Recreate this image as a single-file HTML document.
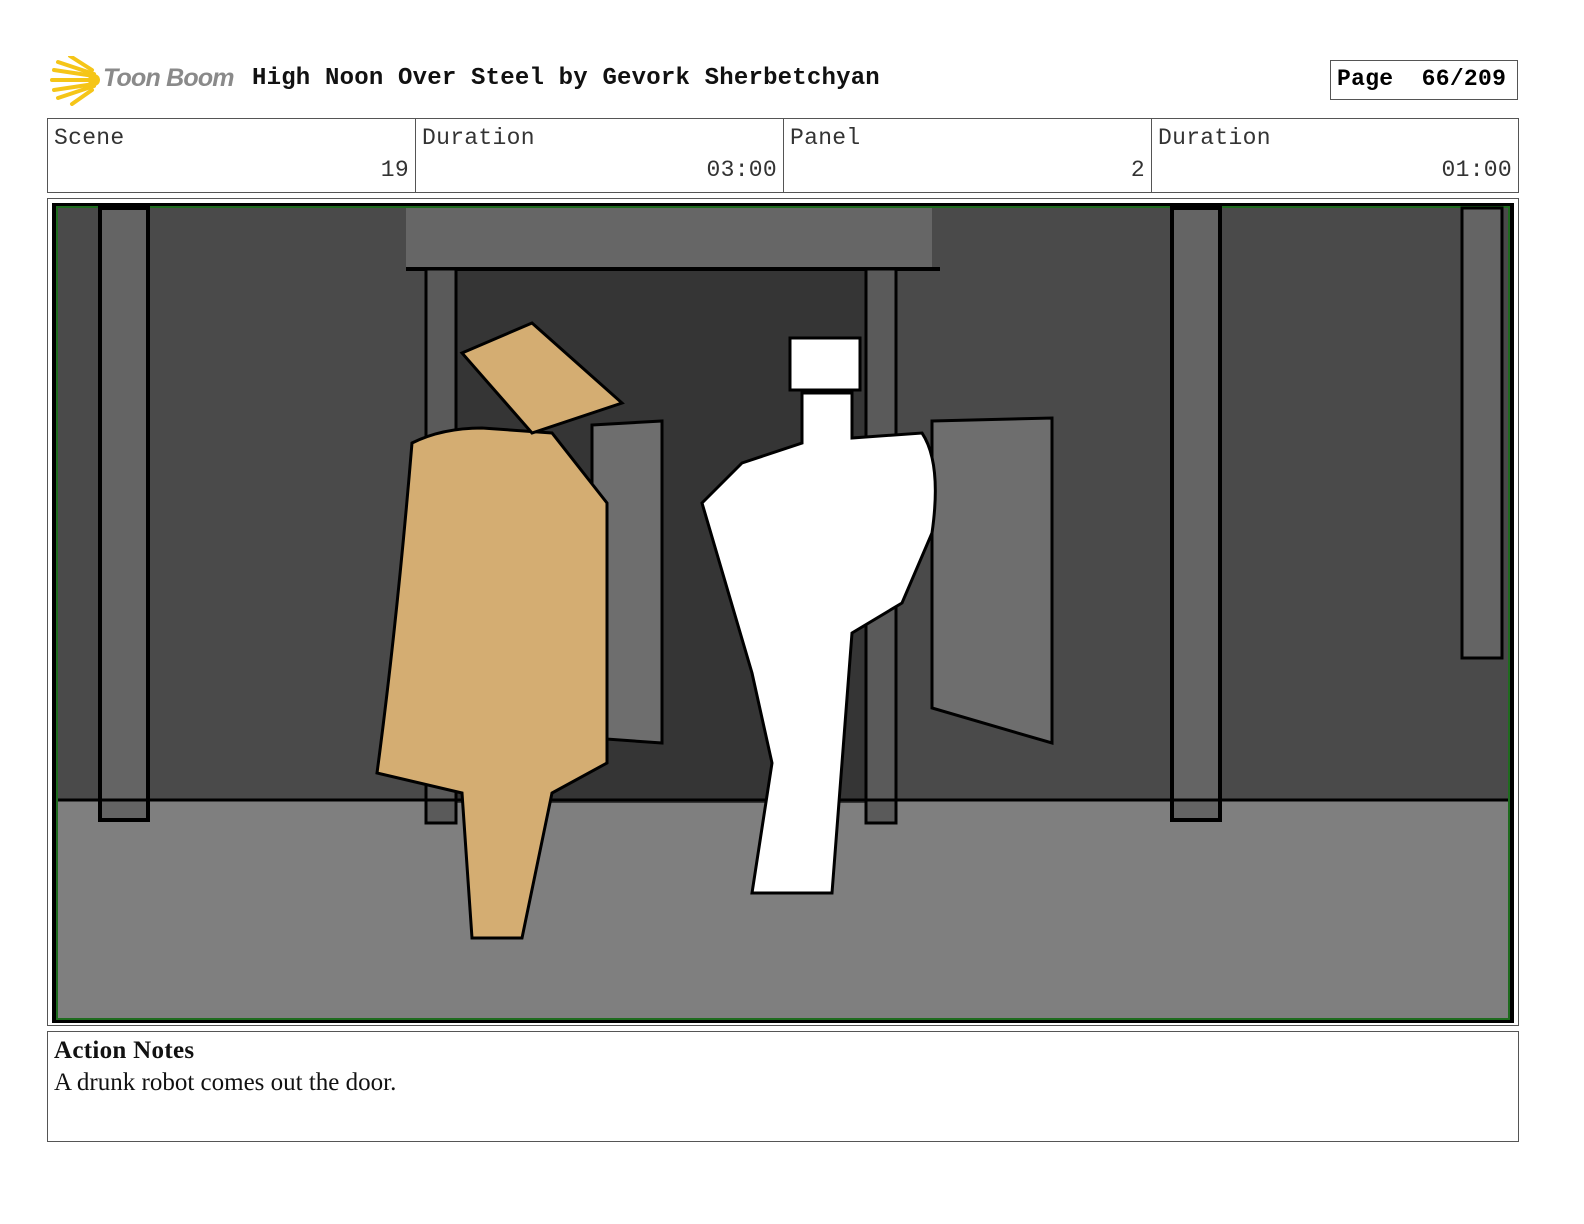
<!DOCTYPE html>
<html><head><meta charset="utf-8"><style>
body{margin:0;background:#fff;width:1584px;height:1224px;position:relative;overflow:hidden;font-family:"Liberation Mono",monospace}
.a{position:absolute}
.cell{position:absolute;top:118px;height:75px;border:1px solid #555;box-sizing:border-box;font-size:23px;color:#333;letter-spacing:0.3px}
.cell .l{position:absolute;left:6px;top:6px}
.cell .v{position:absolute;right:6px;top:38px}
</style></head><body>
<svg class="a" style="left:50px;top:56px" width="52" height="50" viewBox="0 0 52 50">
<g stroke="#f5c518" stroke-width="4" stroke-linecap="round">
<line x1="46" y1="24" x2="2" y2="24"/><line x1="44" y1="18" x2="8" y2="6"/><line x1="44" y1="30" x2="8" y2="42"/>
<line x1="42" y1="14" x2="20" y2="0"/><line x1="42" y1="34" x2="22" y2="48"/><line x1="44" y1="20" x2="4" y2="14"/><line x1="44" y1="28" x2="4" y2="34"/></g>
<circle cx="44" cy="24" r="6" fill="#f5c518"/></svg>
<div class="a" style="left:103px;top:64px;font:italic bold 25px 'Liberation Sans',sans-serif;color:#8a8a8a;letter-spacing:-0.8px">Toon Boom</div>
<div class="a" style="left:252px;top:65px;font-weight:bold;font-size:24px;color:#111;letter-spacing:0.2px">High Noon Over Steel by Gevork Sherbetchyan</div>
<div class="a" style="left:1330px;top:60px;width:188px;height:40px;border:1px solid #555;box-sizing:border-box;font-weight:bold;font-size:23px;padding:5px 0 0 6px;white-space:pre;letter-spacing:0.3px">Page  66/209</div>
<div class="cell" style="left:47px;width:369px"><span class="l">Scene</span><span class="v">19</span></div>
<div class="cell" style="left:415px;width:369px"><span class="l">Duration</span><span class="v">03:00</span></div>
<div class="cell" style="left:783px;width:369px"><span class="l">Panel</span><span class="v">2</span></div>
<div class="cell" style="left:1151px;width:368px"><span class="l">Duration</span><span class="v">01:00</span></div>
<div class="a" style="left:47px;top:198px;width:1472px;height:828px;border:1px solid #555;box-sizing:border-box"></div>
<svg class="a" style="left:52px;top:203px" width="1462" height="820" viewBox="0 0 1462 820">
<rect width="1462" height="820" fill="#000"/>
<rect x="4" y="3" width="1454" height="814" fill="#1e6b1e"/>
<rect x="6" y="5" width="1450" height="810" fill="#4a4a4a"/>
<rect x="6" y="598" width="1450" height="217" fill="#7f7f7f"/>
<rect x="404" y="65" width="420" height="535" fill="#353535"/>
<rect x="354" y="5" width="526" height="62" fill="#666"/>
<line x1="354" y1="66" x2="888" y2="66" stroke="#000" stroke-width="4"/>
<rect x="48" y="5" width="48" height="612" fill="#646464" stroke="#000" stroke-width="4"/>
<rect x="1120" y="5" width="48" height="612" fill="#646464" stroke="#000" stroke-width="4"/>
<rect x="1410" y="5" width="40" height="450" fill="#646464" stroke="#000" stroke-width="3"/>
<rect x="374" y="66" width="30" height="554" fill="#5a5a5a" stroke="#000" stroke-width="3"/>
<rect x="814" y="66" width="30" height="554" fill="#5a5a5a" stroke="#000" stroke-width="3"/>
<line x1="6" y1="597" x2="1456" y2="597" stroke="#000" stroke-width="3"/>
<path d="M540 222 L610 218 L610 540 L540 535Z" fill="#6e6e6e" stroke="#000" stroke-width="3"/>
<path d="M880 218 L1000 215 L1000 540 L880 505Z" fill="#6e6e6e" stroke="#000" stroke-width="3"/>
<path d="M360 240 Q390 225 430 225 L500 230 L555 300 L555 560 L500 590 L470 735 L420 735 L410 590 L325 570 Q345 420 360 240Z" fill="#d4ad72" stroke="#000" stroke-width="3"/>
<path d="M410 150 L480 120 L570 200 L480 230Z" fill="#d4ad72" stroke="#000" stroke-width="3"/>
<rect x="738" y="135" width="70" height="52" fill="#fff" stroke="#000" stroke-width="3"/>
<path d="M750 190 L800 190 L800 235 L870 230 Q890 260 880 330 L850 400 L800 430 L780 690 L700 690 L720 560 L700 470 L650 300 L690 260 L750 240Z" fill="#fff" stroke="#000" stroke-width="3"/>
</svg>
<div class="a" style="left:47px;top:1031px;width:1472px;height:111px;border:1px solid #555;box-sizing:border-box;font-family:'Liberation Serif',serif;font-size:25px;color:#111;padding:5px 0 0 6px">
<div style="font-weight:bold;margin-bottom:4px;letter-spacing:0.3px">Action Notes</div>A drunk robot comes out the door.</div>
</body></html>
